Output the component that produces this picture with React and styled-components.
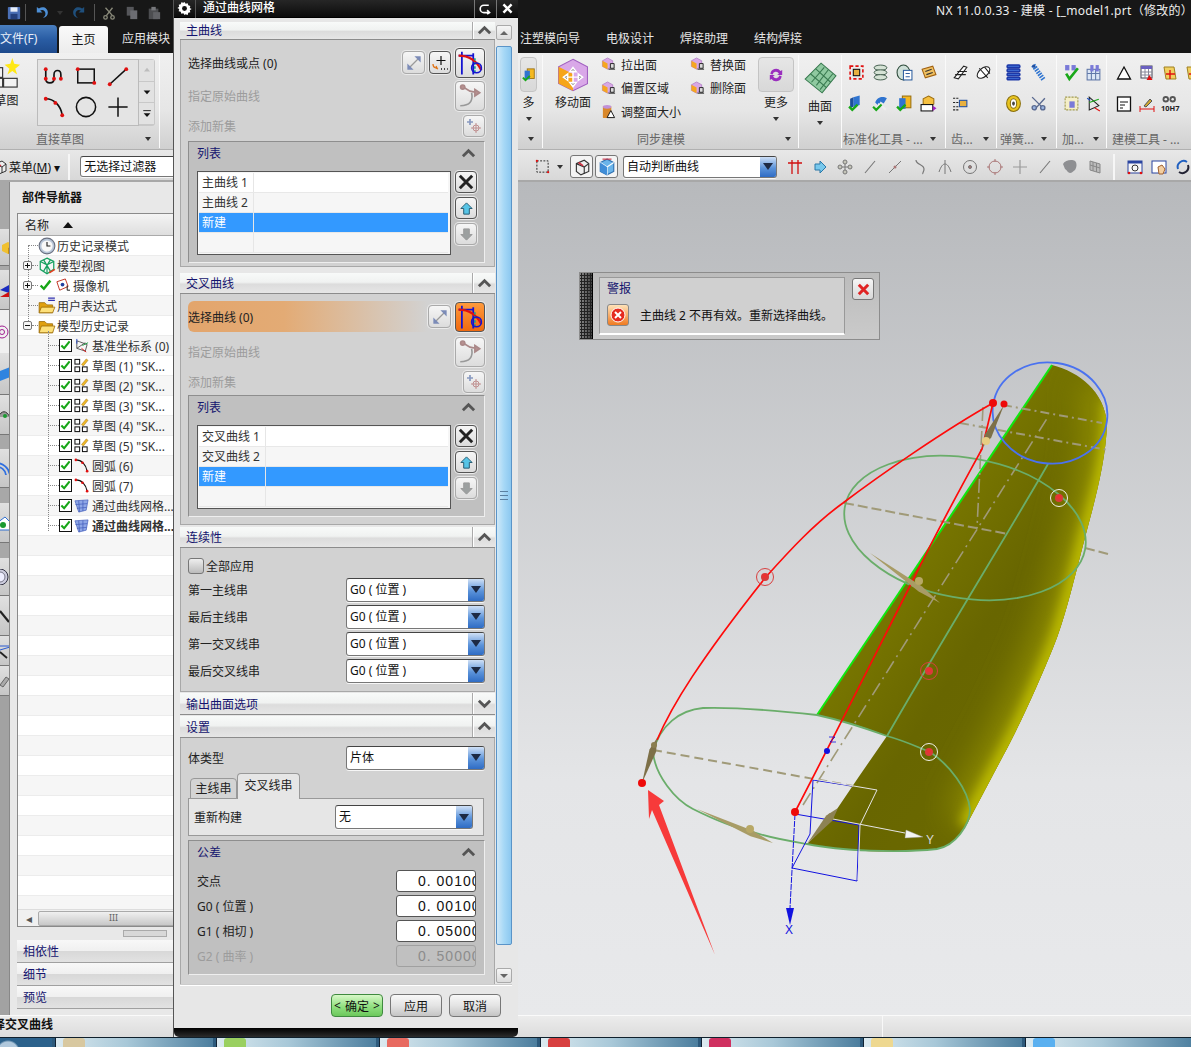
import React from "react";
import styled, { createGlobalStyle } from "styled-components";

const GlobalStyle = createGlobalStyle`
  html, body { margin: 0; padding: 0; background: #e6e7e9; }
  * { box-sizing: border-box; }
  body { font-family: "Noto Sans", "Noto Sans CJK SC", sans-serif; font-size: 12px; color: #222; }
`;

// ---------- little drawings, all on a 16x16 grid
const RED = "#e01010";
const icons = {
  save: <><rect x="1" y="1" width="14" height="14" rx="1" fill="#4a6fb5" /><rect x="4" y="1.5" width="8" height="5" fill="#e8eef8" /><rect x="4" y="9" width="8" height="6" fill="#24407c" /></>,
  undo: <path d="M3 2v6h6L6.6 5.8C9 4.4 12 5.6 12.2 9c.1 2-1 3.600-2.700 4.800 3.500-.6 5.500-3 5.300-6C14.500 3 9.500.6 5.200 3.800z" fill="#4d8fd6" />,
  redo: <path d="M13 2v6H7l2.400-2.200C7 4.400 4 5.600 3.800 9c-.1 2 1 3.600 2.700 4.800C3 13.200 1 10.800 1.200 7.800 1.500 3 6.500.6 10.800 3.800z" fill="#1f4f7c" />,
  cut: <g fill="none" stroke="#8a8a7a" strokeWidth="1.500"><path d="M12 2L5 11M4 2l8 9" /><circle cx="4" cy="13" r="2" /><circle cx="12" cy="13" r="2" /></g>,
  copy: <g fill="#55565a"><rect x="2" y="1" width="8" height="10" /><rect x="6" y="5" width="8" height="10" fill="#6c6d72" /></g>,
  paste: <g><rect x="2" y="3" width="11" height="12" fill="#4c4d50" /><rect x="5" y="1" width="5" height="4" fill="#77787c" /><rect x="7" y="7" width="8" height="8" fill="#616266" /></g>,
  sketch: <g><g fill="#f2f2f2" stroke="#333" strokeWidth=".6"><rect x="1" y="5" width="5" height="5" /><rect x="1" y="10.500" width="5" height="4.500" /><rect x="6.500" y="10.500" width="7" height="4.500" /></g><path d="M11 0l1 3 3 .5-2.500 2 1 3-2.500-1.800L8.500 8.500l1-3L7 3.500 10 3z" fill="#ffe815" /></g>,
  profile: <g><path d="M2 3v7c0 4 6 4 6 0V7c0-4 5-4 5 0v3" fill="none" stroke="#111" strokeWidth="1.200" /><g fill={RED}><circle cx="2" cy="10" r="1.400" /><circle cx="8" cy="10" r="1.400" /><circle cx="13" cy="10" r="1.400" /><circle cx="2" cy="3" r="1.400" /></g></g>,
  rect: <g><rect x="2" y="3" width="12" height="10" fill="none" stroke="#111" strokeWidth="1.100" /><circle cx="2" cy="3" r="1.400" fill={RED} /><circle cx="14" cy="13" r="1.400" fill={RED} /></g>,
  line: <g><path d="M2 14L14 3" stroke="#111" strokeWidth="1.100" /><circle cx="2" cy="14" r="1.400" fill={RED} /><circle cx="14" cy="3" r="1.400" fill={RED} /></g>,
  arc: <g><path d="M2 2c6 0 11 5 12 12" fill="none" stroke="#111" strokeWidth="1.200" /><g fill={RED}><circle cx="2" cy="2" r="1.400" /><circle cx="9" cy="5" r="1.400" /><circle cx="14" cy="14" r="1.400" /></g></g>,
  circle: <circle cx="8" cy="8" r="7" fill="none" stroke="#111" strokeWidth="1.100" />,
  plus: <path d="M8 1v14M1 8h14" stroke="#111" strokeWidth="1.100" />,
  caretUp: <path d="M4 10l4-5 4 5z" fill="#bdbdbd" />,
  caretDown: <path d="M3.500 6h9L8 11z" fill="#111" />,
  caretMore: <g><path d="M3 3.500h10" stroke="#111" strokeWidth="1.200" /><path d="M3.500 7h9L8 12z" fill="#111" /></g>,
  moveFace: <g><path d="M8 .6l6.800 3.500v8L8 15.400 1.200 12V4.100z" fill="#d9a8e8" stroke="#a060c0" strokeWidth=".5" /><path d="M1.200 4.100L8 7.500v7.900L1.200 12z" fill="#f6a51a" /><path d="M8 5.500v7M4.500 9h7M8 4.500l-1.500 2h3zM8 13.500l-1.500-2h3zM3.500 9l2-1.500v3zM12.500 9l-2-1.500v3z" stroke="#fff" strokeWidth=".7" fill="#333" /></g>,
  faceSm: <g><path d="M7 1l5.500 3v6L7 13 1.500 10V4z" fill="#d8a8e4" stroke="#9050b0" strokeWidth=".5" /><path d="M1.500 4L7 7v6l-5.500-3z" fill="#f5a620" /><path d="M10 7h4v5h-4zM8 13h7" fill="#ddd" stroke="#111" strokeWidth=".9" /></g>,
  faceTri: <g><rect x="2" y="2" width="9" height="13" rx="1" fill="#d9882a" /><ellipse cx="6.500" cy="3" rx="4.500" ry="2" fill="#c090d8" /><path d="M10.500 7l4 7.500h-8z" fill="#fff" stroke="#111" /></g>,
  more: <g fill="#9a2fbe"><path d="M3 7a5 5 0 0 1 9-2.500l1.500-1V8H9l1.600-1.200A3 3 0 0 0 5 7.500z" /><path d="M13 9a5 5 0 0 1-9 2.500l-1.500 1V8H7l-1.600 1.200A3 3 0 0 0 11 8.500z" /></g>,
  surface: <g><path d="M1 8.500L8.500 1 15.500 7 9 15z" fill="#8fc9a0" stroke="#397a50" strokeWidth=".5" /><path d="M3.500 6L11 12.500M6 3.700l7 6.300M6.300 11.500L12 4M4 10l6-7M8 13.500l6-7.500" stroke="#397a50" strokeWidth=".5" /></g>,
  stdA: <g><rect x="2" y="2" width="12" height="12" fill="none" stroke={RED} strokeWidth="1.500" strokeDasharray="3 2" /><rect x="5" y="5" width="6" height="6" fill="#e8b040" stroke="#111" /></g>,
  stdB: <g fill="#d5e2d5" stroke="#2d4a3a" strokeWidth=".8"><ellipse cx="8" cy="3.500" rx="6" ry="2.500" /><ellipse cx="8" cy="8" rx="6" ry="2.500" /><ellipse cx="8" cy="12.500" rx="6" ry="2.500" /></g>,
  stdC: <g><ellipse cx="7" cy="8" rx="6" ry="7" fill="#cfe0d8" stroke="#2d4a3a" /><rect x="7" y="6" width="8" height="9" fill="#fff" stroke="#3060a0" /><path d="M9 9h4M9 12h4" stroke="#3060a0" /></g>,
  stdD: <g><path d="M2 5l10-3 3 8-10 3z" fill="#f0c060" stroke="#a06010" /><path d="M5 7l6-2M6 10l6-2" stroke="#333" /></g>,
  stdE: <g><path d="M5 2l6-1.500v9L5 11z" fill="#2f74d0" /><path d="M5 2L2 3.500v9L5 11z" fill="#1d4f9a" /><path d="M1 11l3 3 5-5" fill="none" stroke="#19a819" strokeWidth="2.200" /></g>,
  stdF: <g><path d="M3 7c2-6 8-6 11-4l-3 5-3-2-2 4z" fill="#2f74d0" /><path d="M7 8l-3 6M8 9l5 5" stroke="#eee" strokeWidth="2" /><path d="M1 11l3 3 5-5" fill="none" stroke="#19a819" strokeWidth="2" /></g>,
  stdG: <g><rect x="6" y="1" width="8" height="11" fill="#f5b820" stroke="#9a7010" /><rect x="3" y="3" width="6" height="10" fill="#2f74d0" /><path d="M1 11l3 3 5-5" fill="none" stroke="#19a819" strokeWidth="2.200" /></g>,
  stdH: <g><path d="M8 1l5 2.500v5L8 11 3 8.500v-5z" fill="#f5c040" stroke="#a07010" /><rect x="1" y="9" width="11" height="6" fill="#fff" stroke="#111" /><path d="M12 10l3.500 2.500L12 15z" fill="#a020c0" /></g>,
  gearA: <g fill="none" stroke="#222"><path d="M2 13L11 2l3 1-8 11z" fill="#fff" /><path d="M5 7h9M3 10h10" /></g>,
  gearB: <g fill="#fff" stroke="#222"><ellipse cx="8" cy="8" rx="7" ry="4" transform="rotate(-40 8 8)" /><path d="M4 4l8 9M9 3l5 6" /></g>,
  gearC: <g><path d="M1 3h5M1 7h5M1 11h5M1 14h5" stroke="#222" strokeDasharray="2 1" /><rect x="7" y="5" width="7" height="6" fill="#e8b040" stroke="#2050a0" /></g>,
  spring: <g stroke="#1d38a8" strokeWidth="1.400" fill="#3a68d0"><rect x="2" y="1" width="12" height="2.500" rx="1" /><rect x="2" y="4.800" width="12" height="2.500" rx="1" /><rect x="2" y="8.600" width="12" height="2.500" rx="1" /><rect x="2" y="12.400" width="12" height="2.500" rx="1" /></g>,
  springB: <g><path d="M3 1l10 14" stroke="#2f74d0" strokeWidth="4.500" strokeDasharray="1.500 1" /><circle cx="3.500" cy="2" r="1.500" fill="#2050a0" /></g>,
  coil: <g><ellipse cx="8" cy="8" rx="6.500" ry="7.500" fill="#e8c420" stroke="#8a7010" /><ellipse cx="8" cy="8" rx="3" ry="4.500" fill="#fff" stroke="#8a7010" /><ellipse cx="8" cy="8" rx="1.300" ry="2" fill="#444" /></g>,
  clamp: <g stroke="#5a6a90" strokeWidth="1.300" fill="none"><path d="M2 2l12 12M14 3L4 14" /><circle cx="4" cy="12" r="2" fill="#9ab4e0" /><circle cx="12" cy="12" r="2" fill="#9ab4e0" /></g>,
  addA: <g><rect x="2" y="1" width="4" height="5" fill="#7a7ad8" /><rect x="8" y="1" width="4" height="5" fill="#7a7ad8" /><path d="M3 9l3 5 8-10" fill="none" stroke="#19a819" strokeWidth="2.500" /></g>,
  addB: <g><rect x="2" y="5" width="12" height="10" fill="#dce6f5" stroke="#6078a8" /><path d="M6 5v10M10 5v10M2 9h12" stroke="#6078a8" /><rect x="5" y="1" width="3" height="6" fill="#7a7ad8" /><rect x="10" y="1" width="3" height="6" fill="#7a7ad8" /></g>,
  addC: <g><rect x="2" y="2" width="12" height="12" fill="#f5efc8" stroke="#a09a50" strokeDasharray="2 1" /><rect x="6" y="6" width="5" height="6" fill="#7a7ad8" /></g>,
  addD: <g fill="none" stroke="#222"><path d="M4 2v12l9-4z" /><path d="M4 7l9-3" stroke="#19a819" /><path d="M2 3l3 2" stroke="#2050c0" /><path d="M9 12l5 3" stroke={RED} /></g>,
  tri: <path d="M8 2l6.500 12h-13z" fill="#fff" stroke="#111" strokeWidth="1.300" />,
  table: <g><rect x="2" y="1" width="11" height="12" fill="#fff" stroke="#445" /><rect x="2" y="1" width="11" height="3" fill="#6a60c0" /><path d="M2 7h11M2 10h11M6 4v9M9.500 4v9" stroke="#889" /><path d="M10.500 10l3 5h-6z" fill={RED} /></g>,
  note: <g><rect x="1.500" y="1" width="13" height="14" fill="#fff" stroke="#111" strokeWidth="1.300" /><path d="M4 6h8M4 9h5M4 12h3" stroke="#111" /></g>,
  brush: <g><path d="M1 13h14M1 10v6M15 10v6" stroke={RED} /><path d="M5 10l6-7 2 2-6 6z" fill="#d0a830" stroke="#555" /></g>,
  fit: <g><circle cx="4.500" cy="4" r="3" fill="#555" /><circle cx="11" cy="4" r="3" fill="#555" /><circle cx="4.500" cy="4" r="1.200" fill="#eee" /><circle cx="11" cy="4" r="1.200" fill="#eee" /><text x="0" y="15" fontSize="7" fontWeight="700" fill="#222">10H7</text></g>,
  grid: <g><path d="M2 2h10l2 12H4z" fill="#f0d060" stroke="#a08020" /><path d="M8 5v9M4 9h9" stroke={RED} strokeWidth="1.400" /></g>,
  dashBox: <g><rect x="2" y="2" width="12" height="12" fill="none" stroke="#222" strokeDasharray="2 1.500" /><circle cx="2" cy="2" r="1.200" fill={RED} /><circle cx="14" cy="14" r="1.200" fill={RED} /></g>,
  viewA: <g><path d="M3 5l7-3 4 3v7l-7 3-4-3z" fill="#eee" stroke="#333" /><path d="M3 5l7 3 4-3M10 8v6" stroke="#333" fill="none" /><path d="M5 4l4 3" stroke="#cc3040" strokeWidth="1.500" /></g>,
  viewB: <g><path d="M8 1l6 3v8l-6 3-6-3V4z" fill="#6ab4ea" stroke="#3070b0" /><path d="M8 8l6-4M8 8v7M8 8L2 4" stroke="#fff" /><path d="M2 4l6 4v7l-6-3z" fill="#3f8dd8" /><path d="M4 1h8" stroke="#cc3040" /></g>,
  trim: <path d="M5 1v14M11 1v14M1 4h14" stroke="#d01010" strokeWidth="1.300" />,
  flow: <path d="M3 5h5V2l6 6-6 6v-3H3z" fill="#78c8ec" stroke="#2a78a8" />,
  pts: <g fill="#c4c4b8" stroke="#777"><circle cx="8" cy="3" r="2" /><circle cx="8" cy="13" r="2" /><circle cx="3" cy="8" r="2" /><circle cx="13" cy="8" r="2" /><path d="M8 5v6M5 8h6" /></g>,
  lnA: <path d="M3 14L13 2" stroke="#777" strokeWidth="1.100" />,
  lnB: <g><path d="M2 14L14 2" stroke="#777" /><circle cx="8" cy="8" r="1.500" fill="#a77" /></g>,
  lnC: <path d="M4 1c0 5 8 4 8 9 0 3-2 4-1 5" fill="none" stroke="#777" strokeWidth="1.200" />,
  lnD: <path d="M2 13c2-6 4-8 6-8s4 2 6 8M8 1v14" fill="none" stroke="#777" />,
  lnE: <g fill="none" stroke="#777"><circle cx="8" cy="8" r="6.500" /><circle cx="8" cy="8" r="1.500" fill="#a77" /></g>,
  lnF: <g fill="none" stroke="#a77"><circle cx="8" cy="8" r="6" /><path d="M8 0v3M8 13v3M0 8h3M13 8h3" /></g>,
  lnG: <path d="M8 1v14M1 8h14" stroke="#999" strokeWidth="1.200" />,
  lump: <path d="M1 5c2-4 9-5 12-3 2 2 2 6 0 9-2 1-3 3-5 3-2 0-3-3-5-4z" fill="#8e8f92" />,
  sheet: <g fill="#bbb" stroke="#888"><path d="M3 2l10 3v9L3 11z" /><path d="M6 3v9M9.500 4v9M3 6l10 3" /></g>,
  fitWin: <g><rect x="1" y="2" width="14" height="12" fill="#f6f6f6" stroke="#2a44a0" /><rect x="1" y="2" width="14" height="2.500" fill="#2a44a0" /><circle cx="8" cy="9" r="3" fill="none" stroke="#333" /><circle cx="2" cy="14" r="1.300" fill={RED} /><circle cx="14" cy="14" r="1.300" fill={RED} /></g>,
  hand: <g><rect x="1" y="2" width="14" height="12" fill="#fff" stroke="#2a44a0" /><path d="M7 8l4-2 3 4-2 5H8z" fill="#f4cfa0" stroke="#a06030" /></g>,
  rotate: <g fill="none" strokeWidth="2"><path d="M3 10A6 6 0 0 1 12 3" stroke="#2060c0" /><path d="M13 6a6 6 0 0 1-9 7" stroke="#223" /></g>,
  clock: <g><circle cx="8" cy="8" r="7" fill="#b8c6d8" stroke="#6a7080" /><circle cx="8" cy="8" r="5" fill="#f8f8f8" /><path d="M8 4.500V8h3" stroke="#222" fill="none" /></g>,
  modelView: <g fill="none" stroke="#17a060" strokeWidth="1.100"><path d="M8 1l6 3v7l-6 4-6-4V4z" /><path d="M2 4l6 3 6-3M8 7v8M5 2.500l6 10M11 2.500L5 12.500" /><path d="M10 14l5-3" stroke="#e04020" strokeWidth="1.400" /></g>,
  camera: <g><path d="M2 4l9-3 3 8-9 4z" fill="#fff" stroke="#c03020" /><circle cx="8" cy="7" r="2" fill="#2040a0" /><path d="M13 8v5h3" fill="none" stroke="#111" /></g>,
  folder: <g><path d="M1 4h5l2 2h5v8H1z" fill="#e0a010" stroke="#9a6a08" strokeWidth=".7" /><path d="M3 8h12l-2 6H1z" fill="#fde07a" stroke="#9a6a08" strokeWidth=".7" /></g>,
  folderExpr: <g><path d="M1 5h5l2 2h5v7H1z" fill="#e0a010" stroke="#9a6a08" strokeWidth=".7" /><path d="M3 9h12l-2 5H1z" fill="#fde07a" stroke="#9a6a08" strokeWidth=".7" /><path d="M9 1h6M9 3h6" stroke="#3030b0" /></g>,
  datum: <g fill="none" stroke="#555"><path d="M3 3v8l9 3 2-7-8-3z" /><path d="M3 11l9-6" /><path d="M3 1v5" stroke="#2040c0" /><path d="M9 8l6-3" stroke="#19a040" /><path d="M8 11l5 4" stroke={RED} /></g>,
  sketchNode: <g><g fill="#fff" stroke="#111" strokeWidth="1.100"><rect x="1" y="1.500" width="5" height="5" /><rect x="1" y="9.500" width="5" height="5" /><rect x="9" y="9.500" width="5" height="5" /></g><path d="M8 7l5-6 2 1.500-5 6z" fill="#f0b828" stroke="#997010" strokeWidth=".5" /></g>,
  meshNode: <g fill="#8ea6e6" stroke="#3d58b8" strokeWidth=".7"><path d="M1 3l14-1-2 11-8 2z" /><path d="M5 3l1 12M9.500 2.500L9.500 14M1.500 7l12.500-1M3 11l10.500-1" fill="none" /></g>,
  diag: <g stroke="#7c8cb8" strokeWidth="1.300" fill="#7c8cb8"><path d="M3 13L13 3" stroke="#9a9a9a" /><path d="M10 2h4v4zM2 10v4h4z" /></g>,
  plusDots: <g><path d="M9 1v9M4.500 5.500h9" stroke="#111" strokeWidth="1.200" /><path d="M1 9c0 3 1 4 4 4l-1-2M4 13l2 1" stroke="#e07010" fill="none" strokeWidth="1.300" /><path d="M9 14h1M12 14h1M15 14h.800" stroke="#111" strokeWidth="1.600" /></g>,
  rule: <g fill="none"><path d="M3 1v14M1 3.500h9M10 2v13" stroke="#1414d0" strokeWidth="1.100" /><path d="M1 3.500c6 0 11 3 14 9" stroke="#e01010" strokeWidth="1.400" /><path d="M11 5v10" stroke="#10a090" strokeDasharray="1.500 1" /><circle cx="12" cy="11" r="3" stroke="#1414d0" /></g>,
  origin: <g fill="none" stroke="#aa8888"><path d="M2 14c6 0 8-3 7-8" stroke="#999" /><path d="M3 2l5 3 5 1" /><circle cx="3.500" cy="2.500" r="1.300" fill="#b89090" /><path d="M11 4l3 2-3 2z" fill="#b89090" /></g>,
  addSet: <g><path d="M4 1v6M1 4h6" stroke="#8899c0" strokeWidth="1.700" /><circle cx="10" cy="10" r="3" fill="none" stroke="#c09090" /><path d="M10 5v10M5 10h10" stroke="#c09090" /></g>,
  close: <path d="M2.500 2.500l11 11M13.500 2.500l-11 11" stroke="#222" strokeWidth="2.600" />,
  up: <path d="M8 2l6 6h-3v6H5V8H2z" fill="#56c4e6" stroke="#22586e" />,
  down: <path d="M8 14L2 8h3V2h6v6h3z" fill="#9ca0a0" stroke="#999" />,
  gear: <g fill="#fff"><path d="M8 1l1.200 2 2.200-.6.600 2.200 2.200.6-.6 2.200 2 1.200-2 1.200.6 2.200-2.200.6-.6 2.200-2.200-.6L8 15l-1.200-2-2.200.6-.6-2.200-2.200-.6.600-2.200-2-1.200 2-1.200-.6-2.200 2.200-.6.600-2.200 2.200.6z" /><circle cx="8" cy="8" r="2.600" fill="#111" /></g>,
  reset: <path d="M3 3h7a3.500 3.500 0 0 1 0 9H4M6 1L3 3l3 3" fill="none" stroke="#fff" strokeWidth="2" transform="rotate(180 8 8)" />,
  closeW: <path d="M3 3l10 10M13 3L3 13" stroke="#fff" strokeWidth="3" />,
  redX: <path d="M3 3l10 10M13 3L3 13" stroke="#e02424" strokeWidth="3.200" />,
  alertX: <g><circle cx="8" cy="8" r="7" fill="#e52a1e" stroke="#fff" strokeWidth="1" /><path d="M5 5l6 6M11 5l-6 6" stroke="#fff" strokeWidth="2" /></g>,
  chevUp: <path d="M2 11l6-6 6 6" fill="none" stroke="#555" strokeWidth="3" />,
  chevDown: <path d="M2 5l6 6 6-6" fill="none" stroke="#555" strokeWidth="3" />,
  check: <path d="M2 8l4 4 8-10" fill="none" stroke="#17a617" strokeWidth="3" />,
  stripCube: <g><path d="M2 6l6-3 6 3v6l-6 3-6-3z" fill="#f0c030" /><path d="M8 9l6-3v6l-6 3z" fill="#c89010" /></g>,
  stripFlag: <g><path d="M0 8l9-5v8z" fill="#1a2cc0" /><path d="M0 15l9-5v5z" fill="#d01010" /></g>,
  stripAim: <g fill="none" stroke="#a02090"><circle cx="2" cy="8" r="6" /><circle cx="2" cy="8" r="2.500" /></g>,
  stripBook: <path d="M0 5l10-4v10L0 15z" fill="#2f84e0" />,
  stripEye: <g><path d="M-2 10c4-7 8-7 12 0" fill="#999" stroke="#333" /><circle cx="5" cy="9" r="2" fill="#1a9a30" /></g>,
  stripWave: <g fill="none" stroke="#2f6fe0" strokeWidth="1.800"><path d="M-4 3a14 14 0 0 1 14 12" /><path d="M-4 7a9 9 0 0 1 10 8" /></g>,
  stripHouse: <g><path d="M-3 8l8-6 5 5v8H-3z" fill="#fff" stroke="#2f6fd0" /><circle cx="3" cy="10" r="3" fill="#1a9a30" /></g>,
  stripDial: <g><circle cx="0" cy="8" r="8" fill="#ccd" stroke="#334" /><circle cx="0" cy="8" r="5" fill="#eef" stroke="#778" /></g>,
  stripPen: <path d="M0 3l9 11" stroke="#222" strokeWidth="2.200" />,
  stripFan: <g stroke="#2a5ad0" fill="none"><path d="M-3 3l13 0M0 7l10-3" /><path d="M0 9l7 6" stroke="#222" strokeWidth="1.800" /></g>,
  stripTool: <g stroke="#666" fill="#aaa"><path d="M0 12l6-8 3 2-6 8z" /></g>,
};

const Svg = styled.svg`
  display: block;
  flex: none;
  overflow: ${(p) => (p.$bleed ? "hidden" : "visible")};
`;

const Icon = ({ n, s = 16 }) => (
  <Svg width={s} height={s} viewBox="0 0 16 16">
    {icons[n]}
  </Svg>
);

// ---------- page frame
const Root = styled.div`
  position: relative;
  width: 1191px;
  height: 1047px;
  overflow: hidden;
  display: flex;
  flex-direction: column;
  background: #222;
`;

const TopBar = styled.div`
  height: 25px;
  background: #171717;
  display: flex;
  align-items: center;
  padding-left: 7px;
`;

const Qat = styled.div`
  display: flex;
  align-items: center;
  flex: none;
  width: 929px;
`;

const QatSlot = styled.span`
  display: flex;
  width: ${(p) => p.$w}px;
  justify-content: center;
`;

const QatSep = styled.span`
  width: 1px;
  height: 17px;
  background: #555;
  margin: 0 4px;
`;

const WindowTitle = styled.div`
  color: #eee;
  white-space: nowrap;
  font-size: 12px;
  letter-spacing: 0.3px;
  line-height: 16px;
  margin-top: -4px;
`;

const TabRow = styled.div`
  height: 28px;
  background: #171717;
  display: flex;
  align-items: flex-end;
`;

const FileTab = styled.div`
  width: 57px;
  height: 28px;
  background: linear-gradient(#4a7fc0, #2a5da4 50%, #1e4a8c);
  border-radius: 0 4px 0 0;
  color: #e8eef8;
  line-height: 27px;
  white-space: nowrap;
`;

const HomeTab = styled.div`
  width: 49px;
  height: 27px;
  margin-left: 2px;
  background: linear-gradient(#fafafa, #ececec);
  border-radius: 3px 3px 0 0;
  text-align: center;
  line-height: 28px;
  color: #111;
`;

const TabLabel = styled.div`
  color: #e6e6e6;
  height: 28px;
  line-height: 28px;
  white-space: nowrap;
  margin-left: ${(p) => p.$ml}px;
`;

const Ribbon = styled.div`
  height: 97px;
  display: flex;
  background: linear-gradient(#f0f0f0, #e6e6e6 60%, #d0d0d0);
  overflow: hidden;
  border-bottom: 1px solid #b0b0b0;
`;

const Group = styled.div`
  flex: none;
  width: ${(p) => p.$w}px;
  display: flex;
  flex-direction: column;
  overflow: hidden;
  border-right: ${(p) => (p.$sep === false ? "none" : "1px solid #fafafa")};
  margin: 2px 0 1px;
`;

const GroupBody = styled.div`
  flex: 1;
  display: flex;
  overflow: hidden;
`;

const GroupFoot = styled.div`
  height: 18px;
  display: flex;
  align-items: center;
  justify-content: space-between;
  color: #666;
  padding: 0 ${(p) => p.$pr ?? 7}px 0 ${(p) => p.$pl ?? 1}px;
  white-space: nowrap;
`;

const FootCaret = styled.span`
  width: 0;
  height: 0;
  border-left: 3.500px solid transparent;
  border-right: 3.500px solid transparent;
  border-top: 4px solid #333;
`;

const BigTool = styled.div`
  width: ${(p) => p.$w}px;
  margin-left: ${(p) => p.$ml ?? 0}px;
  flex: none;
  display: flex;
  flex-direction: column;
  align-items: center;
  color: #222;
  padding-top: ${(p) => p.$pt ?? 2}px;
`;

const BoxedIcon = styled.div`
  width: ${(p) => p.$w}px;
  height: 35px;
  display: flex;
  align-items: center;
  justify-content: center;
  border: 1px solid #c4c4c4;
  border-radius: 4px;
  background: linear-gradient(#e6e6e6, #d8d8d8);
`;

const BigLabel = styled.div`
  margin-top: ${(p) => p.$mt ?? 3}px;
  margin-left: ${(p) => p.$ml ?? 0}px;
  line-height: 16px;
  white-space: nowrap;
`;

const SmallCaret = styled(FootCaret)`
  margin-top: 6px;
`;

const Gallery = styled.div`
  width: 118px;
  height: 67px;
  margin: 4px 0 0 18px;
  display: flex;
  flex: none;
`;

const GalleryGrid = styled.div`
  width: 102px;
  display: grid;
  grid-template-columns: repeat(3, 1fr);
  place-items: center;
  background: #e4e4e4;
  border: 1px solid #bbb;
  padding: 0 4px 3px 0;
`;

const GalleryScroll = styled.div`
  width: 16px;
  display: grid;
  grid-template-rows: repeat(3, 1fr);
  border: 1px solid #c8c8c8;
  border-left: none;
  border-radius: 0 3px 3px 0;
  & > div {
    display: flex;
    align-items: center;
    justify-content: center;
    border-bottom: 1px solid #c8c8c8;
    background: #e2e2e2;
  }
`;

const SmallTools = styled.div`
  display: grid;
  grid-template-columns: ${(p) => p.$cols};
  grid-auto-rows: 23.5px;
  margin-top: -2px;
  flex: none;
`;

const SmallTool = styled.div`
  display: flex;
  align-items: center;
  gap: 5px;
  white-space: nowrap;
  color: #222;
`;

const IconGrid = styled.div`
  display: grid;
  grid-template-columns: repeat(${(p) => p.$cols}, ${(p) => p.$cell}px);
  grid-template-rows: 31px 31px;
  justify-items: center;
  align-items: center;
  padding: 2px 0 0 ${(p) => p.$pl ?? 4}px;
`;

const ToolRow = styled.div`
  height: 32px;
  display: flex;
  align-items: center;
  padding-top: 3px;
  background: linear-gradient(#e8e8e8, #d8d8d8);
  border-bottom: 2px solid #a8a8a8;
`;

const ToolLeft = styled.div`
  width: 518px;
  flex: none;
  display: flex;
  align-items: center;
`;

const MenuLabel = styled.div`
  color: #111;
  white-space: nowrap;
`;

const ToolSep = styled.div`
  width: 2px;
  height: 26px;
  background: #f6f6f6;
  margin: ${(p) => p.$m};
`;

const ComboBox = styled.div`
  width: ${(p) => p.$w}px;
  height: ${(p) => p.$h || 22}px;
  flex: none;
  display: flex;
  background: #fff;
  border: 1px solid #777;
  border-top-color: #444;
  border-radius: 3px;
  overflow: hidden;
  box-shadow: 0 1px 0 #f6f6f6;
`;

const ComboText = styled.div`
  flex: 1;
  padding-left: 3px;
  line-height: ${(p) => p.$lh || 20}px;
  color: #111;
  white-space: nowrap;
`;

const ComboArrow = styled.div`
  width: 16px;
  display: flex;
  align-items: center;
  justify-content: center;
  background: linear-gradient(#cfe0f6, #5b93da 55%, #2f6cc4);
  &::after {
    content: "";
    border-left: 5.500px solid transparent;
    border-right: 5.500px solid transparent;
    border-top: 7px solid #1d2a44;
  }
`;

const ToolRight = styled.div`
  display: flex;
  align-items: center;
  padding-left: 17px;
`;

const ToolCell = styled.div`
  width: ${(p) => p.$w || 25}px;
  flex: none;
  display: flex;
  justify-content: center;
`;

const ViewBtn = styled.div`
  width: 23px;
  height: 23px;
  margin-right: 2px;
  display: flex;
  align-items: center;
  justify-content: center;
  border: 1px solid #777;
  border-radius: 3px;
  background: #f4f4f4;
`;

// ---------- work area
const Workspace = styled.div`
  flex: 1;
  display: flex;
  min-height: 0;
`;

const LeftStrip = styled.div`
  width: 10px;
  flex: none;
  display: flex;
  flex-direction: column;
  background: #a2a2a2;
  border-right: 1px solid #888;
  overflow: hidden;
`;

const StripItem = styled.div`
  height: ${(p) => p.$h}px;
  flex: none;
  display: flex;
  align-items: center;
  overflow: hidden;
  background: ${(p) => (p.$flat ? "#f0f0f0" : p.$btn ? "linear-gradient(#e0e0e0, #c6c6c6)" : "#a8a8a8")};
  border-bottom: ${(p) => (p.$btn ? "1px solid #777" : "none")};
`;

const Nav = styled.div`
  width: 508px;
  flex: none;
  background: #e8e8e8;
  padding: 1px 0 0 7px;
  display: flex;
  flex-direction: column;
`;

const NavTitle = styled.div`
  height: 30px;
  padding-left: 5px;
  font-weight: 700;
  line-height: 29px;
  color: #111;
`;

const NavTable = styled.div`
  height: 714px;
  border: 1px solid #8a8a8a;
  background: #fff;
  display: flex;
  flex-direction: column;
`;

const NavHead = styled.div`
  height: 22px;
  flex: none;
  display: flex;
  align-items: center;
  gap: 14px;
  padding-left: 7px;
  background: linear-gradient(#f4f4f4, #dedede);
  border-bottom: 1px solid #aaa;
  color: #222;
`;

const SortMark = styled.span`
  border-left: 5.500px solid transparent;
  border-right: 5.500px solid transparent;
  border-bottom: 6px solid #111;
`;

const TreeBody = styled.div`
  position: relative;
  flex: 1;
  overflow: hidden;
`;

const TreeRow = styled.div`
  position: relative;
  height: 20px;
  display: flex;
  align-items: center;
  gap: ${(p) => p.$gap ?? 1}px;
  padding-left: ${(p) => p.$pl ?? 0}px;
  background: ${(p) => (p.$odd ? "#f6f6f6" : "#fff")};
  border-bottom: 1px solid #ececec;
  white-space: nowrap;
  color: #333;
  font-weight: ${(p) => (p.$strong ? 700 : 400)};
`;

const Expander = styled.span`
  position: absolute;
  left: 5px;
  top: 5px;
  width: 9px;
  height: 9px;
  background: #f6f6f6;
  border: 1px solid #777;
  border-radius: 2px;
  z-index: 2;
  &::before {
    content: "";
    position: absolute;
    left: 1px;
    right: 1px;
    top: 3px;
    height: 1px;
    background: #111;
  }
  &::after {
    content: "";
    display: ${(p) => (p.$open ? "none" : "block")};
    position: absolute;
    top: 1px;
    bottom: 1px;
    left: 3px;
    width: 1px;
    background: #111;
  }
`;

const TreeDotsH = styled.span`
  position: absolute;
  left: ${(p) => p.$x}px;
  width: ${(p) => p.$w}px;
  top: 9px;
  border-top: 1px dotted #888;
`;

const TreeDotsV = styled.span`
  position: absolute;
  left: ${(p) => p.$x}px;
  top: ${(p) => p.$top}px;
  height: ${(p) => p.$h}px;
  border-left: 1px dotted #888;
`;

const CheckBoxIcon = styled.span`
  width: 13px;
  height: 13px;
  flex: none;
  background: #fff;
  border: 1px solid #111;
  display: flex;
`;

const TreeLabel = styled.span`
  margin-left: 1px;
`;

const HScroll = styled.div`
  height: 17px;
  flex: none;
  display: flex;
  align-items: center;
  background: #f0f0f0;
  border-top: 1px solid #ddd;
  padding-left: 8px;
  color: #555;
`;

const HThumb = styled.div`
  margin-left: 6px;
  width: 470px;
  height: 15px;
  background: linear-gradient(#f0f0f0, #c8c8c8);
  border: 1px solid #aaa;
  border-radius: 2px;
  padding-left: 70px;
  line-height: 12px;
  font-size: 9px;
  color: #666;
  &::after {
    content: "III";
  }
`;

const Splitter = styled.div`
  height: 13px;
  display: flex;
  align-items: center;
  &::before {
    content: "";
    margin-left: 106px;
    width: 42px;
    height: 5px;
    background: #d8d8d8;
    border: 1px solid #aaa;
  }
`;

const AccordionRow = styled.div`
  height: 23px;
  padding-left: 6px;
  line-height: 24px;
  color: #14146e;
  background: linear-gradient(#f8f8f8, #f0f0f0 48%, #d8d8d8 52%, #e2e2e2);
  border-bottom: 1px solid #a0a0a0;
`;

const Canvas = styled.div`
  position: relative;
  flex: 1;
  background: linear-gradient(#b7b9bc, #e4e5e7 72%, #e8e9eb);
  overflow: hidden;
`;

const Scene = styled.svg`
  position: absolute;
  inset: 0;
`;

const AlertBox = styled.div`
  position: absolute;
  left: 61px;
  top: 90px;
  width: 301px;
  height: 68px;
  display: flex;
  background: linear-gradient(#bcbcbc, #cacaca);
  border: 1px solid #8c8c8c;
`;

const AlertGrip = styled.div`
  width: 13px;
  flex: none;
  background: radial-gradient(circle, #222 1px, transparent 1.300px) 3px 1px / 3px 3px, linear-gradient(90deg, #888, #444);
  border-right: 1px solid #000;
`;

const AlertInner = styled.div`
  width: 246px;
  height: 58px;
  margin: 4px 7px 0 6px;
  background: #d0d0d0;
  border: 1px solid #999;
  border-bottom: 2px solid #fff;
  padding: 3px 0 0 7px;
  flex: none;
`;

const AlertTitle = styled.div`
  color: #14146e;
  line-height: 15px;
`;

const AlertLine = styled.div`
  display: flex;
  align-items: center;
  gap: 11px;
  margin-top: 8px;
  color: #111;
  white-space: nowrap;
`;

const AlertIconWrap = styled.div`
  width: 22px;
  height: 22px;
  display: flex;
  align-items: center;
  justify-content: center;
  border: 1px solid #888;
  border-radius: 3px;
  background: linear-gradient(#ffe2b8, #f07a20);
`;

const AlertClose = styled.div`
  width: 22px;
  height: 22px;
  margin-top: 5px;
  display: flex;
  align-items: center;
  justify-content: center;
  border: 1px solid #777;
  border-radius: 3px;
  background: linear-gradient(#f6f6f6, #d8d8d8);
`;

const StatusBar = styled.div`
  height: 22px;
  display: flex;
  align-items: center;
  background: linear-gradient(#ececec, #dcdcdc);
  border-top: 1px solid #fafafa;
  font-weight: 700;
  color: #111;
  overflow: hidden;
`;

const StatusText = styled.span`
  margin-left: -7px;
  width: 890px;
  flex: none;
  border-right: 1px solid #f8f8f8;
  line-height: 18px;
  padding-bottom: 4px;
`;

const TaskBar = styled.div`
  height: 10px;
  display: flex;
  gap: 3px;
  background: #2d5a7c;
  border-top: 1px solid #10202c;
`;

const StartOrb = styled.div`
  width: 52px;
  flex: none;
  background: radial-gradient(circle at 8px 14px, #b0c8dc 10px, #2c628c 12px);
`;

const TaskItem = styled.div`
  width: ${(p) => p.$w}px;
  flex: none;
  background: linear-gradient(90deg, #dceaf0, #a8c8d8 45%, #4c7e9e);
  border-left: 1px solid #123;
  display: flex;
  padding-left: 7px;
`;

const TaskMark = styled.span`
  width: 22px;
  height: 10px;
  background: ${(p) => p.$c};
  border-radius: 3px 3px 0 0;
`;

// ---------- options dialog, floats over everything
const Dialog = styled.div`
  position: absolute;
  left: 173px;
  top: 0;
  width: 345px;
  height: 1037px;
  display: flex;
  flex-direction: column;
  background: #e7e7e7;
  border-left: 1px solid #555;
`;

const DlgTitle = styled.div`
  height: 18px;
  flex: none;
  display: flex;
  align-items: center;
  background: linear-gradient(#262626, #0c0c0c);
  color: #fff;
  font-weight: 500;
  border-bottom: 1px solid #000;
`;

const DlgGear = styled.div`
  width: 22px;
  padding-left: 3px;
  border-right: 1px solid #555;
  height: 18px;
  display: flex;
  align-items: center;
`;

const DlgName = styled.div`
  flex: 1;
  padding-left: 7px;
  margin-top: -3px;
`;

const DlgTitleBtn = styled.div`
  width: 22px;
  height: 18px;
  display: flex;
  align-items: center;
  justify-content: center;
  border-left: 1px solid #777;
`;

const DlgMain = styled.div`
  flex: 1;
  display: flex;
  min-height: 0;
  padding-left: 6px;
`;

const Panel = styled.div`
  width: 315px;
  flex: none;
  padding-top: 4px;
`;

const SecHead = styled.div`
  height: ${(p) => p.$h}px;
  margin-top: ${(p) => p.$mt ?? 0}px;
  display: flex;
  align-items: center;
  padding-left: 6px;
  background: linear-gradient(#f8faf9, #f0f2f1 46%, #dcdcdc 56%, #e6e6e6);
  border-bottom: 1px solid #8c8c8c;
  color: #14146e;
`;

const SecTitle = styled.div`
  flex: 1;
  line-height: 14px;
  margin-top: ${(p) => p.$nudge}px;
`;

const SecChevron = styled.div`
  width: 23px;
  height: 100%;
  display: flex;
  align-items: center;
  justify-content: center;
  border-left: 1px solid #aaa;
  box-shadow: inset 1px 0 0 #fff;
`;

const SecBody = styled.div`
  height: ${(p) => p.$h}px;
  background: #d2d2d2;
  border-left: 1px solid #a8a8a8;
  border-right: 1px solid #a8a8a8;
  border-bottom: 1px solid #a8a8a8;
  padding: ${(p) => p.$pt ?? 0}px 9px 0 7px;
`;

const FieldRow = styled.div`
  height: ${(p) => p.$h}px;
  margin-top: ${(p) => p.$mt ?? 0}px;
  display: flex;
  align-items: center;
  color: ${(p) => (p.$off ? "#9c9c9c" : "#222")};
  white-space: nowrap;
`;

const OrangeRow = styled(FieldRow)`
  background: linear-gradient(90deg, #e3a56c, #e3ab75 40%, #d2d2d2 100%);
  background-size: 240px 100%;
  background-repeat: no-repeat;
  border-radius: 6px;
`;

const FieldLabel = styled.div`
  flex: 1;
`;

const ToolBtn = styled.div`
  width: ${(p) => p.$w}px;
  height: ${(p) => p.$h}px;
  margin-left: 4px;
  flex: none;
  display: flex;
  align-items: center;
  justify-content: center;
  border: 1px solid ${(p) => (p.$on ? "#555" : "#aaa")};
  border-radius: 4px;
  background: ${(p) => (p.$hot ? "linear-gradient(#ff9a3c, #f06a10)" : "linear-gradient(#f6f6f6, #dcdcdc)")};
  box-shadow: 0 0 0 1px #eaeaea;
`;

const SubBox = styled.div`
  height: ${(p) => p.$h}px;
  margin-top: ${(p) => p.$mt ?? 0}px;
  background: #c0c0c0;
  border: 1px solid #8e8e8e;
  border-right-color: #eee;
  border-bottom-color: #eee;
  padding: 0 8px;
`;

const SubHead = styled.div`
  height: 22px;
  display: flex;
  align-items: center;
  justify-content: space-between;
  color: #14146e;
`;

const ListWrap = styled.div`
  display: flex;
  gap: 4px;
  margin-top: 7px;
`;

const ListTable = styled.div`
  width: 254px;
  height: 84px;
  flex: none;
  padding: 1px;
  background: #f6f6f6;
  border: 1px solid #555;
`;

const ListRow = styled.div`
  height: 20px;
  display: grid;
  grid-template-columns: ${(p) => p.$col}px 1fr;
  background: ${(p) => (p.$sel ? "#3399ff" : p.$odd ? "#f6f6f6" : "#fff")};
  color: ${(p) => (p.$sel ? "#fff" : "#333")};
  border-bottom: 1px solid #e8e8e8;
  line-height: 19px;
  width: 249px;
  & > span {
    padding-left: 3px;
    border-right: 1px solid #e6e6e6;
    white-space: nowrap;
  }
`;

const ListBtns = styled.div`
  display: flex;
  flex-direction: column;
  gap: 4px;
  & > div {
    margin-left: 0;
  }
`;

const GroupRows = styled.div`
  padding-top: ${(p) => p.$pt}px;
`;

const Tick = styled.div`
  width: 16px;
  height: 16px;
  margin-right: 2px;
  border: 1px solid #777;
  border-radius: 3px;
  background: linear-gradient(#eee, #bbb);
`;

const TabBar = styled.div`
  display: flex;
  align-items: flex-end;
  height: 26px;
  padding-left: 2px;
  margin-top: 2px;
`;

const Tab = styled.div`
  height: ${(p) => (p.$on ? 26 : 21)}px;
  width: ${(p) => p.$w}px;
  text-align: center;
  line-height: ${(p) => (p.$on ? 24 : 20)}px;
  border: 1px solid #999;
  border-bottom: ${(p) => (p.$on ? "none" : "1px solid #999")};
  border-radius: 4px 4px 0 0;
  background: ${(p) => (p.$on ? "#e6e6e6" : "#d4d4d4")};
  color: #222;
  position: relative;
  top: 1px;
  z-index: ${(p) => (p.$on ? 1 : 0)};
`;

const TabPanel = styled.div`
  height: 38px;
  display: flex;
  align-items: center;
  padding: 0 10px 0 5px;
  background: #e6e6e6;
  border: 1px solid #999;
  margin-right: 1px;
  color: #222;
`;

const NumInput = styled.div`
  width: 80px;
  height: 22px;
  overflow: hidden;
  padding-left: 21px;
  line-height: 21px;
  font-family: "Liberation Sans", sans-serif;
  font-size: 14px;
  letter-spacing: 1px;
  white-space: pre;
  background: ${(p) => (p.$off ? "#c0c0c0" : "#fff")};
  color: ${(p) => (p.$off ? "#8c8c8c" : "#111")};
  border: 1px solid ${(p) => (p.$off ? "#a0a0a0" : "#555")};
  border-radius: 3px;
  flex: none;
`;

const VBar = styled.div`
  width: 16px;
  margin-left: 1px;
  flex: none;
  padding-top: 7px;
  display: flex;
  flex-direction: column;
`;

const VBtn = styled.div`
  height: 15px;
  flex: none;
  display: flex;
  align-items: center;
  justify-content: center;
  border: 1px solid #aaa;
  border-radius: 2px;
  background: linear-gradient(#f6f6f6, #dcdcdc);
  &::after {
    content: "";
    border-left: 4px solid transparent;
    border-right: 4px solid transparent;
    ${(p) => (p.$down ? "border-top: 4px solid #666;" : "border-bottom: 4px solid #666;")}
  }
`;

const VThumb = styled.div`
  height: 899px;
  margin-top: 6px;
  display: flex;
  align-items: center;
  justify-content: center;
  background: linear-gradient(90deg, #cfe8f8, #a6d8f6 50%, #8cc8f0);
  border: 1px solid #5a94c8;
  border-radius: 2px;
  &::after {
    content: "";
    width: 8px;
    height: 7px;
    border-top: 1px solid #5a80a0;
    border-bottom: 1px solid #5a80a0;
    background: linear-gradient(#5a80a0, #5a80a0) center / 100% 1px no-repeat;
  }
`;

const VGap = styled.div`
  height: 23px;
  flex: none;
`;

const DlgFoot = styled.div`
  height: 43px;
  flex: none;
  margin: 0 6px;
  padding: 8px 11px 0 0;
  display: flex;
  justify-content: flex-end;
  gap: 7px;
  border-top: 1px solid #fff;
  box-shadow: 0 -1px 0 #ccc;
`;

const DlgButton = styled.div`
  width: 52px;
  height: 23px;
  display: flex;
  align-items: center;
  justify-content: center;
  gap: 4px;
  border: 1px solid ${(p) => (p.$ok ? "#3f8a3f" : "#777")};
  border-radius: 4px;
  background: ${(p) => (p.$ok ? "linear-gradient(#d8f8c8, #90e080 55%, #6cc85c)" : "linear-gradient(#f8f8f8, #e4e4e4 50%, #c4c4c4)")};
  color: #111;
`;

const DlgBottom = styled.div`
  height: 9px;
  flex: none;
  background: linear-gradient(#000, #2c2c2c);
  border-radius: 0 0 5px 5px;
`;

// ---------- data
const strip = [
  { h: 47 },
  { h: 37, btn: true, n: "stripCube" },
  { h: 4 },
  { h: 40, btn: true, n: "stripFlag" },
  { h: 43, flat: true, n: "stripAim" },
  { h: 42, btn: true, n: "stripBook" },
  { h: 40, btn: true, n: "stripEye" },
  { h: 14 },
  { h: 39, btn: true, n: "stripWave" },
  { h: 15 },
  { h: 40, btn: true, n: "stripHouse" },
  { h: 15 },
  { h: 38, btn: true, n: "stripDial" },
  { h: 40, btn: true, n: "stripPen" },
  { h: 30, btn: true, n: "stripFan" },
  { h: 30, btn: true, n: "stripTool" },
];

const branches = [
  ["datum", "基准坐标系 (0)"],
  ["sketchNode", '草图 (1) "SK...'],
  ["sketchNode", '草图 (2) "SK...'],
  ["sketchNode", '草图 (3) "SK...'],
  ["sketchNode", '草图 (4) "SK...'],
  ["sketchNode", '草图 (5) "SK...'],
  ["arc", "圆弧 (6)"],
  ["arc", "圆弧 (7)"],
  ["meshNode", "通过曲线网格..."],
  ["meshNode", "通过曲线网格...", true],
];

const rightTools = ["trim", "flow", "pts", "lnA", "lnB", "lnC", "lnD", "lnE", "lnF", "lnG", "lnA", "lump", "sheet"];

const Chevron = ({ down }) => (
  <Icon n={down ? "chevDown" : "chevUp"} s={15} />
);

const Section = ({ title, h, mt, down }) => (
  <SecHead $h={h} $mt={mt}>
    <SecTitle $nudge={h > 18 ? 2 : 0}>{title}</SecTitle>
    <SecChevron>
      <Chevron down={down} />
    </SecChevron>
  </SecHead>
);

const ListBlock = ({ rows, col, mt }) => (
  <SubBox $h={122} $mt={mt}>
    <SubHead>
      <span>列表</span>
      <Chevron />
    </SubHead>
    <ListWrap>
      <ListTable>
        {rows.map((r, i) => (
          <ListRow key={i} $col={col} $odd={i % 2 === 1} $sel={r === "新建"}>
            <span>{r}</span>
          </ListRow>
        ))}
        <ListRow $col={col} $odd>
          <span></span>
        </ListRow>
      </ListTable>
      <ListBtns>
        <ToolBtn $w={22} $h={22} $on>
          <Icon n="close" s={18} />
        </ToolBtn>
        <ToolBtn $w={22} $h={22} $on>
          <Icon n="up" s={15} />
        </ToolBtn>
        <ToolBtn $w={22} $h={22}>
          <Icon n="down" s={15} />
        </ToolBtn>
      </ListBtns>
    </ListWrap>
  </SubBox>
);

const Select = ({ text, w = 139, h = 24 }) => (
  <ComboBox $w={w} $h={h}>
    <ComboText $lh={h - 2}>{text}</ComboText>
    <ComboArrow />
  </ComboBox>
);

const Marker = ({ x, y, ring }) => (
  <g>
    <circle cx={x} cy={y} r="8.500" fill="none" stroke={ring} strokeWidth="1" />
    <circle cx={x} cy={y} r="4" fill="#d93a3a" />
    <circle cx={x} cy={y - 1} r="2" fill="#ee3030" />
  </g>
);

const Cone = ({ x1, y1, x2, y2, c = "#a89c66", w = 3 }) => {
  // thin spear from the tail to the tip, widest in the middle
  const dx = x2 - x1;
  const dy = y2 - y1;
  const len = Math.hypot(dx, dy);
  const nx = (-dy / len) * w;
  const ny = (dx / len) * w;
  const mx = x1 + dx * 0.72;
  const my = y1 + dy * 0.72;
  return <polygon points={`${x1},${y1} ${mx + nx},${my + ny} ${x2},${y2} ${mx - nx},${my - ny}`} fill={c} />;
};

const TUBE =
  "M1052 365 C1080 372 1104 392 1107 423 C1106 460 1095 500 1087 530 C1075 575 1065 620 1053 648 C1040 680 1020 725 1003 756 L967 824 C960 836 950 846 937 849 C905 853 850 853 807 844 C820 832 830 820 837 809 L860 775 L887 736 C865 727 840 720 817 715 Z";

const Model = () => (
  <Scene width="673" height="833" viewBox="518 182 673 833">
    <defs>
      <linearGradient id="tube" gradientUnits="userSpaceOnUse" x1="935" y1="545" x2="1080" y2="640">
        <stop offset="0" stopColor="#767400" />
        <stop offset="0.5" stopColor="#686600" />
        <stop offset="1" stopColor="#6a6800" />
      </linearGradient>
      <clipPath id="tubeClip">
        <path d={TUBE} />
      </clipPath>
      <filter id="softWide" x="-30%" y="-30%" width="160%" height="160%">
        <feGaussianBlur stdDeviation="16" />
      </filter>
      <filter id="softRim" x="-30%" y="-30%" width="160%" height="160%">
        <feGaussianBlur stdDeviation="6" />
      </filter>
    </defs>
    <path d={TUBE} fill="url(#tube)" />
    <g clipPath="url(#tubeClip)" fill="none">
      <path d="M1100 380 C1112 430 1095 500 1087 530 C1075 575 1065 620 1053 648 C1040 680 1020 725 1003 756 L967 824" stroke="#8e8c00" strokeWidth="44" filter="url(#softWide)" />
      <path d="M1110 400 C1110 460 1095 500 1087 530 C1075 575 1065 620 1053 648 C1040 680 1020 725 1003 756 L965 826" stroke="#c2c100" strokeWidth="13" filter="url(#softRim)" />
    </g>
    <path d="M817 715L1052 365" stroke="#0fe80f" strokeWidth="2" />

    <g fill="none" stroke="#a09a78" strokeWidth="2">
      <path d="M653 750L853 786" strokeDasharray="9 5" />
      <path d="M844 503L1008 534M1085 548L1108 554" strokeDasharray="10 4" />
      <path d="M1003 405L1102 423" strokeDasharray="9 4 2 4" />
      <path d="M960 423L1108 450" strokeDasharray="9 4 2 4" />
      <path d="M803 805L1048 417" strokeDasharray="14 5 2 5" strokeWidth="1.600" />
      <path d="M983 407L977 528" strokeDasharray="14 4 2 4" strokeWidth="1.600" />
    </g>

    <g fill="none" stroke="#6aad6a" strokeWidth="1.800">
      <path d="M817 715C790 712 735 707 703 708C680 710 660 725 653 752C655 775 675 800 693 809C715 820 735 828 753 832C770 838 790 841 807 844C840 851 900 853 937 849C955 846 970 825 970 809C968 790 950 765 930 752C915 746 905 741 887 736C865 728 840 720 817 715Z" />
      <ellipse cx="965" cy="528" rx="122" ry="70" transform="rotate(10 965 528)" />
      <path d="M1048 464C1010 530 945 635 887 736" />
    </g>
    <ellipse cx="1050" cy="413" rx="57.500" ry="50.500" transform="rotate(8 1050 413)" fill="none" stroke="#4a72f0" strokeWidth="1.800" />

    <g fill="none" stroke="#ff0a0a" strokeWidth="1.700">
      <path d="M657 740C672 705 700 660 765 578C790 550 815 523 843 503C880 475 945 430 993 403" />
      <path d="M795 812C835 735 870 665 913 580C940 525 965 480 982 449L993 403" />
    </g>

    <g fill="none" stroke="#1212e0" strokeWidth="1">
      <path d="M813 780L852 786M813 780L810 834L792 868L857 881L859 825L795 814" />
      <path d="M795 814L790 908" strokeDasharray="6 1" />
    </g>
    <polygon points="786,908 794,908 790,925" fill="#1212e0" />
    <circle cx="827" cy="751" r="3" fill="#1212e0" />
    <path d="M829 737h6l-5 5h6" stroke="#1212e0" fill="none" strokeWidth=".8" />
    <text x="785" y="934" fontSize="12" fill="#1212e0" fontFamily="Liberation Sans">X</text>

    <g fill="none" stroke="#e4e4e4" strokeWidth="1">
      <path d="M813 779L877 790L860 825L858 880M833 819L905 833" />
    </g>
    <polygon points="906,830 923,837 905,838" fill="#f4f4f4" stroke="#999" strokeWidth=".4" />
    <text x="926" y="844" fontSize="12" fill="#d8d8d8" fontFamily="Liberation Sans">Y</text>

    <Cone x1={1004} y1={405} x2={982} y2={448} c="#7d7048" w={3.500} />
    <circle cx="986" cy="441" r="4" fill="#e6ce82" />
    <Cone x1={642} y1={783} x2={657} y2={738} c="#7d7048" w={3.500} />
    <circle cx="654" cy="745" r="3" fill="#8a7e50" />
    <Cone x1={870} y1={553} x2={940} y2={603} />
    <circle cx="919" cy="581" r="4" fill="#b8a866" />
    <Cone x1={697} y1={809} x2={773} y2={843} />
    <circle cx="750" cy="829" r="4" fill="#b8a866" />
    <Cone x1={807} y1={844} x2={838} y2={808} c="#8d8254" w={4} />
    <circle cx="831" cy="816" r="3" fill="#8d8254" />

    <Marker x={765} y={577} ring="#d84040" />
    <Marker x={1059} y={498} ring="#f0f0e8" />
    <Marker x={929} y={671} ring="#d84040" />
    <Marker x={929} y={752} ring="#f0f0e8" />

    <circle cx="993" cy="403" r="4" fill="#ee0a0a" />
    <circle cx="1004" cy="404" r="3.500" fill="#ee0a0a" />
    <circle cx="642" cy="783" r="4" fill="#ee0a0a" />
    <circle cx="795" cy="812" r="4" fill="#ee0a0a" />

    <polygon points="648,790 664,801 659,805 715,955 652,810 649,819" fill="#f73a3a" />
  </Scene>
);

const App = () => {
  return (
    <Root>
      <GlobalStyle />
      <TopBar>
        <Qat>
          <Icon n="save" s={14} />
          <QatSep />
          <QatSlot $w={22}><Icon n="undo" s={15} /></QatSlot>
          <QatSlot $w={16}><FootCaret /></QatSlot>
          <QatSlot $w={22}><Icon n="redo" s={15} /></QatSlot>
          <QatSep />
          <QatSlot $w={20}><Icon n="cut" s={14} /></QatSlot>
          <QatSlot $w={25}><Icon n="copy" s={14} /></QatSlot>
          <QatSlot $w={20}><Icon n="paste" s={14} /></QatSlot>
        </Qat>
        <WindowTitle>NX 11.0.0.33 - 建模 - [_model1.prt（修改的）</WindowTitle>
      </TopBar>

      <TabRow>
        <FileTab>文件(F)</FileTab>
        <HomeTab>主页</HomeTab>
        <TabLabel $ml={14}>应用模块</TabLabel>
        <TabLabel $ml={350}>注塑模向导</TabLabel>
        <TabLabel $ml={26}>电极设计</TabLabel>
        <TabLabel $ml={26}>焊接助理</TabLabel>
        <TabLabel $ml={26}>结构焊接</TabLabel>
      </TabRow>

      <Ribbon>
        <Group $w={160}>
          <GroupBody>
            <BigTool $w={19} $pt={3}>
              <Svg width="31" height="31" viewBox="0 0 16 16" style={{ marginLeft: -7 }}>{icons.sketch}</Svg>
              <BigLabel $mt={4} $ml={-6}>草图</BigLabel>
            </BigTool>
            <Gallery>
              <GalleryGrid>
                {["profile", "rect", "line", "arc", "circle", "plus"].map((n) => (
                  <Icon key={n} n={n} s={22} />
                ))}
              </GalleryGrid>
              <GalleryScroll>
                <div><Icon n="caretUp" s={12} /></div>
                <div><Icon n="caretDown" s={12} /></div>
                <div><Icon n="caretMore" s={12} /></div>
              </GalleryScroll>
            </Gallery>
          </GroupBody>
          <GroupFoot $pl={36} $pr={8}>直接草图<FootCaret /></GroupFoot>
        </Group>
        <Group $w={360} $sep={false} />
        <Group $w={23}>
          <GroupBody>
            <BigTool $w={17} $pt={2}>
              <BoxedIcon $w={17}><Icon n="stdG" s={14} /></BoxedIcon>
              <BigLabel>多</BigLabel>
              <SmallCaret />
            </BigTool>
          </GroupBody>
          <GroupFoot $pl={0} $pr={8}><span />
            <FootCaret />
          </GroupFoot>
        </Group>
        <Group $w={256}>
          <GroupBody>
            <BigTool $w={56} $ml={2} $pt={3}>
              <Icon n="moveFace" s={34} />
              <BigLabel $mt={3}>移动面</BigLabel>
            </BigTool>
            <SmallTools $cols="89px 68px">
              <SmallTool><Icon n="faceSm" s={15} />拉出面</SmallTool>
              <SmallTool><Icon n="faceSm" s={15} />替换面</SmallTool>
              <SmallTool><Icon n="faceSm" s={15} />偏置区域</SmallTool>
              <SmallTool><Icon n="faceSm" s={15} />删除面</SmallTool>
              <SmallTool><Icon n="faceTri" s={15} />调整面大小</SmallTool>
            </SmallTools>
            <BigTool $w={36} $pt={2}>
              <BoxedIcon $w={36}><Icon n="more" s={18} /></BoxedIcon>
              <BigLabel>更多</BigLabel>
              <SmallCaret />
            </BigTool>
          </GroupBody>
          <GroupFoot $pl={94} $pr={7}>同步建模<FootCaret /></GroupFoot>
        </Group>
        <Group $w={43}>
          <GroupBody>
            <BigTool $w={42} $pt={6}>
              <Icon n="surface" s={34} />
              <BigLabel $mt={4}>曲面</BigLabel>
              <SmallCaret />
            </BigTool>
          </GroupBody>
          <GroupFoot />
        </Group>
        <Group $w={104}>
          <GroupBody>
            <IconGrid $cols={4} $cell={24} $pl={2}>
              {["stdA", "stdB", "stdC", "stdD", "stdE", "stdF", "stdG", "stdH"].map((n) => (
                <Icon key={n} n={n} s={17} />
              ))}
            </IconGrid>
          </GroupBody>
          <GroupFoot $pr={9}>标准化工具 - ...<FootCaret /></GroupFoot>
        </Group>
        <Group $w={51}>
          <GroupBody>
            <IconGrid $cols={2} $cell={23} $pl={3}>
              <Icon n="gearA" s={17} />
              <Icon n="gearB" s={17} />
              <Icon n="gearC" s={17} />
            </IconGrid>
          </GroupBody>
          <GroupFoot $pl={5} $pr={7}>齿...<FootCaret /></GroupFoot>
        </Group>
        <Group $w={60}>
          <GroupBody>
            <IconGrid $cols={2} $cell={25} $pl={4}>
              <Icon n="spring" s={17} />
              <Icon n="springB" s={17} />
              <Icon n="coil" s={17} />
              <Icon n="clamp" s={17} />
            </IconGrid>
          </GroupBody>
          <GroupFoot $pl={3} $pr={9}>弹簧...<FootCaret /></GroupFoot>
        </Group>
        <Group $w={50}>
          <GroupBody>
            <IconGrid $cols={2} $cell={22} $pl={3}>
              <Icon n="addA" s={17} />
              <Icon n="addB" s={17} />
              <Icon n="addC" s={17} />
              <Icon n="addD" s={17} />
            </IconGrid>
          </GroupBody>
          <GroupFoot $pl={5} $pr={7}>加...<FootCaret /></GroupFoot>
        </Group>
        <Group $w={90} $sep={false}>
          <GroupBody>
            <IconGrid $cols={4} $cell={23} $pl={5}>
              <Icon n="tri" s={16} />
              <Icon n="table" s={16} />
              <Icon n="grid" s={16} />
              <Icon n="grid" s={16} />
              <Icon n="note" s={16} />
              <Icon n="brush" s={16} />
              <Icon n="fit" s={17} />
            </IconGrid>
          </GroupBody>
          <GroupFoot $pl={5}>建模工具 - ...</GroupFoot>
        </Group>
      </Ribbon>

      <ToolRow>
        <ToolLeft>
          <Svg $bleed width="7" height="16" viewBox="8 0 7 16" style={{ marginRight: 2 }}>{icons.viewA}</Svg>
          <MenuLabel>菜单(<u>M</u>) ▾</MenuLabel>
          <ToolSep $m="0 10px 0 8px" />
          <ComboBox $w={130} $h={21}>
            <ComboText $lh={19}>无选择过滤器</ComboText>
          </ComboBox>
        </ToolLeft>
        <ToolRight>
          <Icon n="dashBox" s={15} />
          <ToolCell $w={20}><FootCaret /></ToolCell>
          <ViewBtn><Icon n="viewA" s={18} /></ViewBtn>
          <ViewBtn><Icon n="viewB" s={18} /></ViewBtn>
          <ToolCell $w={3} />
          <ComboBox $w={154} $h={22}>
            <ComboText>自动判断曲线</ComboText>
            <ComboArrow />
          </ComboBox>
          <ToolCell $w={5} />
          {rightTools.map((n, i) => (
            <ToolCell key={i}><Icon n={n} s={16} /></ToolCell>
          ))}
          <ToolSep $m="0 8px 0 6px" />
          <ToolCell $w={24}><Icon n="fitWin" s={16} /></ToolCell>
          <ToolCell $w={24}><Icon n="hand" s={16} /></ToolCell>
          <ToolCell $w={24}><Icon n="rotate" s={16} /></ToolCell>
        </ToolRight>
      </ToolRow>

      <Workspace>
        <LeftStrip>
          {strip.map((it, i) => (
            <StripItem key={i} $h={it.h} $btn={it.btn} $flat={it.flat}>
              {it.n && <Svg $bleed width="10" height="16" viewBox="0 0 10 16">{icons[it.n]}</Svg>}
            </StripItem>
          ))}
        </LeftStrip>

        <Nav>
          <NavTitle>部件导航器</NavTitle>
          <NavTable>
            <NavHead>
              名称 <SortMark />
            </NavHead>
            <TreeBody>
              <TreeRow $pl={20}>
                <TreeDotsH $x={10} $w={10} />
                <Icon n="clock" s={18} />历史记录模式
              </TreeRow>
              <TreeRow $pl={20} $odd>
                <Expander /><TreeDotsH $x={14} $w={6} />
                <Icon n="modelView" s={18} />模型视图
              </TreeRow>
              <TreeRow $pl={21} $gap={3}>
                <Expander /><TreeDotsH $x={14} $w={6} />
                <Icon n="check" s={13} />
                <Icon n="camera" s={15} />摄像机
              </TreeRow>
              <TreeRow $pl={20} $odd>
                <TreeDotsH $x={10} $w={10} />
                <Icon n="folderExpr" s={18} />用户表达式
              </TreeRow>
              <TreeRow $pl={20}>
                <Expander $open /><TreeDotsH $x={14} $w={6} />
                <Icon n="folder" s={18} />模型历史记录
              </TreeRow>
              {branches.map(([n, label, strong], i) => (
                <TreeRow key={i} $pl={41} $gap={2} $odd={i % 2 === 0} $strong={strong}>
                  <TreeDotsH $x={30} $w={11} />
                  <CheckBoxIcon><Icon n="check" s={11} /></CheckBoxIcon>
                  <Icon n={n} s={15} />
                  <TreeLabel>{label}</TreeLabel>
                </TreeRow>
              ))}
              {Array.from({ length: 19 }).map((_, i) => (
                <TreeRow key={i} $odd={i % 2 === 0} />
              ))}
              <TreeDotsV $x={10} $top={9} $h={80} />
              <TreeDotsV $x={30} $top={95} $h={200} />
            </TreeBody>
            <HScroll>
              ◂<HThumb />
            </HScroll>
          </NavTable>
          <Splitter />
          <AccordionRow>相依性</AccordionRow>
          <AccordionRow>细节</AccordionRow>
          <AccordionRow>预览</AccordionRow>
        </Nav>

        <Canvas>
          <Model />
          <AlertBox>
            <AlertGrip />
            <AlertInner>
              <AlertTitle>警报</AlertTitle>
              <AlertLine>
                <AlertIconWrap><Icon n="alertX" s={16} /></AlertIconWrap>
                主曲线 2 不再有效。重新选择曲线。
              </AlertLine>
            </AlertInner>
            <AlertClose><Icon n="redX" s={15} /></AlertClose>
          </AlertBox>
        </Canvas>
      </Workspace>

      <StatusBar>
        <StatusText>择交叉曲线</StatusText>
      </StatusBar>

      <TaskBar>
        <StartOrb />
        <TaskItem $w={158}><TaskMark $c="#d8c8a0" /></TaskItem>
        <TaskItem $w={160}><TaskMark $c="#9ad060" /></TaskItem>
        <TaskItem $w={158}><TaskMark $c="#e86a60" /></TaskItem>
        <TaskItem $w={158}><TaskMark $c="#d84040" /></TaskItem>
        <TaskItem $w={159}><TaskMark $c="#d03060" /></TaskItem>
        <TaskItem $w={159}><TaskMark $c="#eed890" /></TaskItem>
        <TaskItem $w={170}><TaskMark $c="#5ab0f0" /></TaskItem>
      </TaskBar>

      <Dialog>
        <DlgTitle>
          <DlgGear><Icon n="gear" s={15} /></DlgGear>
          <DlgName>通过曲线网格</DlgName>
          <DlgTitleBtn><Icon n="reset" s={13} /></DlgTitleBtn>
          <DlgTitleBtn><Icon n="closeW" s={13} /></DlgTitleBtn>
        </DlgTitle>

        <DlgMain>
          <Panel>
            <Section title="主曲线" h={18} />
            <SecBody $h={227} $pt={5}>
              <FieldRow $h={35}>
                <FieldLabel>选择曲线或点 (0)</FieldLabel>
                <ToolBtn $w={23} $h={23}><Icon n="diag" /></ToolBtn>
                <ToolBtn $w={22} $h={23} $on><Icon n="plusDots" /></ToolBtn>
                <ToolBtn $w={30} $h={30} $on><Icon n="rule" s={26} /></ToolBtn>
              </FieldRow>
              <FieldRow $h={32} $off>
                <FieldLabel>指定原始曲线</FieldLabel>
                <ToolBtn $w={30} $h={30}><Icon n="origin" s={26} /></ToolBtn>
              </FieldRow>
              <FieldRow $h={28} $off>
                <FieldLabel>添加新集</FieldLabel>
                <ToolBtn $w={22} $h={22}><Icon n="addSet" /></ToolBtn>
              </FieldRow>
              <ListBlock mt={1} col={55} rows={["主曲线 1", "主曲线 2", "新建"]} />
            </SecBody>

            <Section title="交叉曲线" h={21} mt={6} />
            <SecBody $h={231} $pt={7}>
              <OrangeRow $h={31}>
                <FieldLabel>选择曲线 (0)</FieldLabel>
                <ToolBtn $w={23} $h={23}><Icon n="diag" /></ToolBtn>
                <ToolBtn $w={30} $h={30} $on $hot><Icon n="rule" s={26} /></ToolBtn>
              </OrangeRow>
              <FieldRow $h={33} $mt={3} $off>
                <FieldLabel>指定原始曲线</FieldLabel>
                <ToolBtn $w={30} $h={30}><Icon n="origin" s={26} /></ToolBtn>
              </FieldRow>
              <FieldRow $h={27} $off>
                <FieldLabel>添加新集</FieldLabel>
                <ToolBtn $w={22} $h={22}><Icon n="addSet" /></ToolBtn>
              </FieldRow>
              <ListBlock col={67} rows={["交叉曲线 1", "交叉曲线 2", "新建"]} />
            </SecBody>

            <Section title="连续性" h={21} mt={2} />
            <SecBody $h={144}>
              <GroupRows $pt={8}>
                <FieldRow $h={19}><Tick />全部应用</FieldRow>
                <FieldRow $h={27} $mt={1}><FieldLabel>第一主线串</FieldLabel><Select text="G0 ( 位置 )" /></FieldRow>
                <FieldRow $h={27}><FieldLabel>最后主线串</FieldLabel><Select text="G0 ( 位置 )" /></FieldRow>
                <FieldRow $h={27}><FieldLabel>第一交叉线串</FieldLabel><Select text="G0 ( 位置 )" /></FieldRow>
                <FieldRow $h={27}><FieldLabel>最后交叉线串</FieldLabel><Select text="G0 ( 位置 )" /></FieldRow>
              </GroupRows>
            </SecBody>

            <Section title="输出曲面选项" h={22} mt={1} down />
            <Section title="设置" h={22} mt={1} />
            <SecBody $h={247} $pt={7}>
              <FieldRow $h={25}><FieldLabel>体类型</FieldLabel><Select text="片体" /></FieldRow>
              <TabBar>
                <Tab $w={47}>主线串</Tab>
                <Tab $w={63} $on>交叉线串</Tab>
              </TabBar>
              <TabPanel>
                <FieldLabel>重新构建</FieldLabel>
                <Select text="无" w={138} />
              </TabPanel>
              <SubBox $h={135} $mt={4}>
                <SubHead>
                  <span>公差</span>
                  <Chevron />
                </SubHead>
                <GroupRows $pt={5}>
                  <FieldRow $h={25}><FieldLabel>交点</FieldLabel><NumInput>0. 00100</NumInput></FieldRow>
                  <FieldRow $h={25}><FieldLabel>G0 ( 位置 )</FieldLabel><NumInput>0. 00100</NumInput></FieldRow>
                  <FieldRow $h={25}><FieldLabel>G1 ( 相切 )</FieldLabel><NumInput>0. 05000</NumInput></FieldRow>
                  <FieldRow $h={25} $off><FieldLabel>G2 ( 曲率 )</FieldLabel><NumInput $off>0. 50000</NumInput></FieldRow>
                </GroupRows>
              </SubBox>
            </SecBody>
          </Panel>
          <VBar>
            <VBtn />
            <VThumb />
            <VGap />
            <VBtn $down />
          </VBar>
        </DlgMain>

        <DlgFoot>
          <DlgButton $ok><span>&lt;</span>确定<span>&gt;</span></DlgButton>
          <DlgButton>应用</DlgButton>
          <DlgButton>取消</DlgButton>
        </DlgFoot>
        <DlgBottom />
      </Dialog>
    </Root>
  );
};

export default App;
